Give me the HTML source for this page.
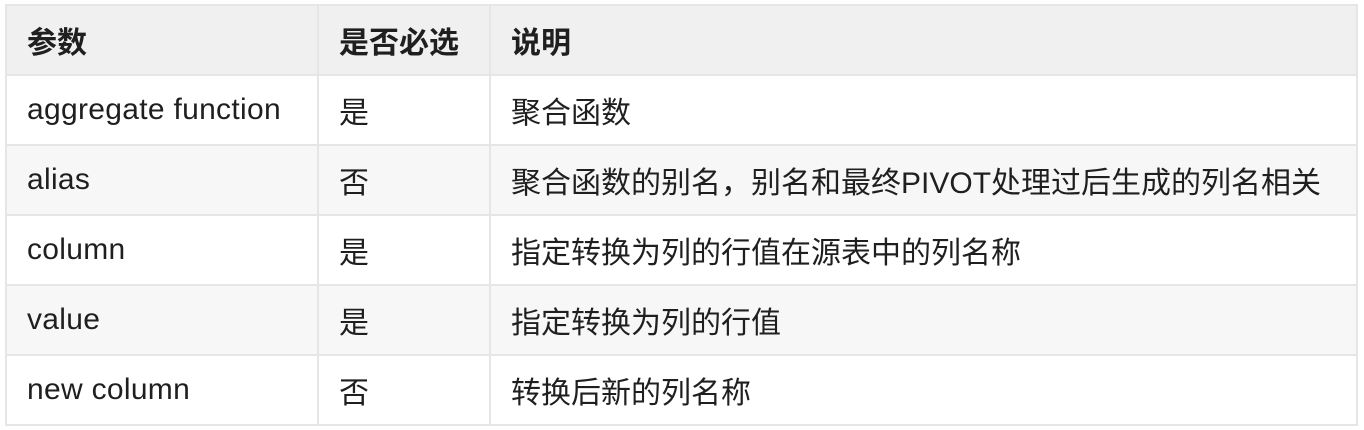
<!DOCTYPE html>
<html><head><meta charset="utf-8"><style>
body{margin:0;background:#fff;font-family:"Liberation Sans","Noto Sans CJK SC",sans-serif;}
table{position:absolute;left:5px;top:4px;border-collapse:collapse;width:1353px;color:#1f1f1f;font-size:30px;}
td,th{border:2px solid #e6e6e6;height:68px;padding:0 0 0 20px;text-align:left;}
td:first-child{letter-spacing:0.3px;}
th{background:#f0f0f0;font-weight:bold;}
tr.s td{background:#f7f7f7;}
</style></head><body>
<table>
<tr><th style="width:290px">参数</th><th style="width:150px">是否必选</th><th>说明</th></tr>
<tr><td>aggregate function</td><td>是</td><td>聚合函数</td></tr>
<tr class="s"><td>alias</td><td>否</td><td>聚合函数的别名，别名和最终PIVOT处理过后生成的列名相关</td></tr>
<tr><td>column</td><td>是</td><td>指定转换为列的行值在源表中的列名称</td></tr>
<tr class="s"><td>value</td><td>是</td><td>指定转换为列的行值</td></tr>
<tr><td>new column</td><td>否</td><td>转换后新的列名称</td></tr>
</table>
</body></html>
